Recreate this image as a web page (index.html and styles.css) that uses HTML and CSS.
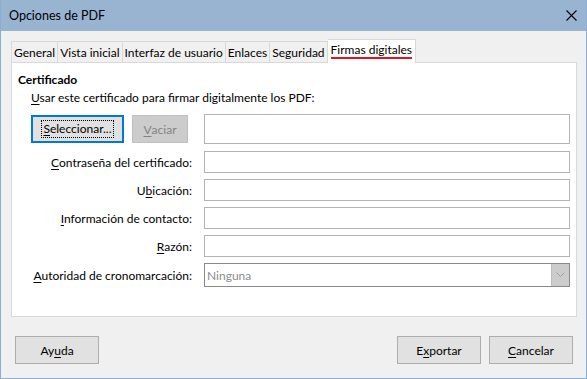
FILE: index.html
```html
<!DOCTYPE html>
<html lang="es">
<head>
<meta charset="utf-8">
<title>Opciones de PDF</title>
<link rel="stylesheet" href="styles.css">
</head>
<body>
<div class="window">
  <div class="titlebar">
    <span class="title">Opciones de PDF</span>
    <svg class="close" width="11" height="11" viewBox="0 0 11 11"><path d="M0.5 0.5 L10.5 10.5 M10.5 0.5 L0.5 10.5" stroke="#000" stroke-width="1.1" fill="none"/></svg>
  </div>
  <div class="content">
    <div class="tabs">
      <div class="tab">General</div>
      <div class="tab">Vista inicial</div>
      <div class="tab">Interfaz de usuario</div>
      <div class="tab">Enlaces</div>
      <div class="tab">Seguridad</div>
      <div class="tab active"><span class="active-label">Firmas digitales</span></div>
    </div>
    <div class="panel">
      <div class="section-title">Certificado</div>
      <div class="intro"><u>U</u>sar este certificado para firmar digitalmente los PDF:</div>
      <div class="form">
        <div class="cert-buttons">
          <div class="btn btn-focus"><span class="focus-rect"><u>S</u>eleccionar...</span></div>
          <div class="btn btn-disabled"><u>V</u>aciar</div>
        </div>
        <div class="field field-tall"></div>
        <div class="label"><u>C</u>ontraseña del certificado:</div>
        <div class="field"></div>
        <div class="label">U<u>b</u>icación:</div>
        <div class="field"></div>
        <div class="label"><u>I</u>nformación de contacto:</div>
        <div class="field"></div>
        <div class="label"><u>R</u>azón:</div>
        <div class="field"></div>
        <div class="label"><u>A</u>utoridad de cronomarcación:</div>
        <div class="combo">
          <span class="combo-text">Ninguna</span>
          <span class="combo-btn"><svg width="9" height="6" viewBox="0 0 9 6"><path d="M0.5 0.5 L4.5 4.5 L8.5 0.5" stroke="#a3a3a3" stroke-width="1" fill="none"/></svg></span>
        </div>
      </div>
    </div>
    <div class="footer">
      <div class="btn btn-footer">Ay<u>u</u>da</div>
      <div class="footer-right">
        <div class="btn btn-footer">E<u>x</u>portar</div>
        <div class="btn btn-footer"><u>C</u>ancelar</div>
      </div>
    </div>
  </div>
</div>
</body>
</html>
```
FILE: styles.css
```css
* { box-sizing: border-box; }
html, body { margin: 0; padding: 0; background: #ffffff; }
body {
  font-family: "Lato", "Liberation Sans", sans-serif;
  font-size: 12px;
  color: #000;
}
u { text-decoration: underline; text-underline-offset: 2px; text-decoration-thickness: 1px; }
.window {
  width: 587px;
  height: 379px;
  background: #f0f0f0;
  border: 1px solid #8cadd3;
  border-top: none;
  display: flex;
  flex-direction: column;
}
.titlebar {
  height: 31px;
  background: #99b4d1;
  display: flex;
  align-items: center;
  justify-content: space-between;
  padding: 0 9px 1px 8px;
  flex: none;
}
.title { font-size: 12.5px; }
.close { display: block; }
.content {
  flex: 1;
  padding: 8px 9px 0 10px;
  display: flex;
  flex-direction: column;
}
.tabs {
  display: flex;
  align-items: flex-end;
  height: 23px;
  flex: none;
}
.tab {
  height: 21px;
  padding: 0 2px;
  border: 1px solid #d9d9d9;
  border-bottom: none;
  border-left-width: 0;
  display: flex;
  align-items: center;
  background: #f0f0f0;
  white-space: nowrap;
}
.tab:first-child { border-left-width: 1px; }
.tab.active {
  height: 24px;
  margin-bottom: -1px;
  background: #ffffff;
  position: relative;
  z-index: 1;
  padding: 0 3px 2px 3px;
}
.active-label {
  border-bottom: 2px solid #e81123;
  padding-bottom: 0px;
  line-height: 15px;
}
.panel {
  height: 255px;
  width: 566px;
  background: #fff;
  border: 1px solid #d9d9d9;
  padding: 9px 6px 0 6px;
  flex: none;
}
.section-title { font-weight: bold; line-height: 16px; }
.intro { line-height: 16px; margin: 2px 0 0 13px; }
.form {
  display: grid;
  grid-template-columns: 161px 366px;
  column-gap: 12px;
  row-gap: 6px;
  margin: 8px 0 0 13px;
  align-items: center;
}
.cert-buttons { display: flex; gap: 8px; margin-bottom: 1px; }
.btn {
  height: 28px;
  background: #e1e1e1;
  border: 1px solid #adadad;
  display: flex;
  align-items: center;
  justify-content: center;
  white-space: nowrap;
}
.btn-focus {
  width: 93px;
  border: 2px solid #0078d7;
}
.focus-rect {
  border: 1px dotted #000;
  padding: 0 1px;
  line-height: 16px;
}
.btn-disabled {
  width: 56px;
  background: #cccccc;
  border-color: #bfbfbf;
  color: #838383;
}
.field {
  height: 22px;
  background: #fff;
  border: 1px solid #b4b4b4;
}
.field-tall { height: 30px; margin-bottom: 1px; }
.label { text-align: right; white-space: nowrap; }
.combo {
  height: 24px;
  border: 1px solid #8a8a8a;
  background: #fff;
  display: flex;
  align-items: center;
  justify-content: space-between;
}
.combo-text { color: #8b8b8b; padding-left: 2px; }
.combo-btn {
  width: 18px;
  height: 22px;
  background: #cccccc;
  border-left: 1px solid #bdbdbd;
  display: flex;
  align-items: center;
  justify-content: center;
}
.combo-btn svg { display: block; }
.footer {
  display: flex;
  justify-content: space-between;
  margin-top: 19px;
  padding: 0 4px 0 4px;
}
.footer-right { display: flex; gap: 8px; }
.btn-footer { width: 84px; }
```
